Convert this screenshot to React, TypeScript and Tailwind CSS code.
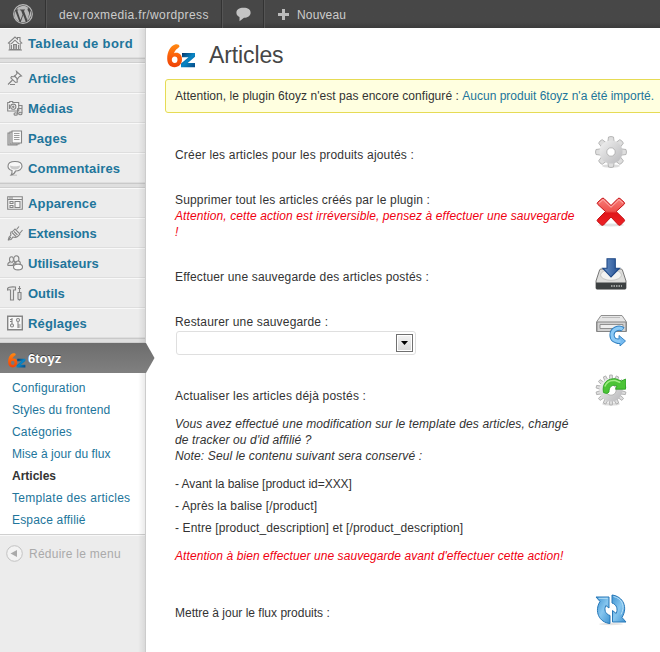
import React from "react";

const menuIcons: Record<string, React.ReactNode> = {
  home: (
    <>
      <path d="M1 8.500 8 2l2.500 2.200V2.500h2.500v4L15.200 8.500M2.800 8v6.500h10.400V8" fill="#f4f4f4" />
      <path d="M4 9 8 5.200 12 9M6.500 14.500V9.500h3v5M4.500 10v4M11.500 10v4M8 9.500v5M1.500 15h13.500" />
    </>
  ),
  pin: (
    <>
      <path d="M9.500 1.500 14.500 6l-2 .5-2.500 3 .3 2.500-1.800.5L3.800 8l.7-1.500 2.800.2 2.700-3z" fill="#f2f2f2" />
      <path d="M5.500 10 1 14.500M7 5.500l4 4M3 14.500h5" />
    </>
  ),
  media: (
    <>
      <path d="M.7 2.500h2V1.500h3v1h6V11H.7z" fill="#f4f4f4" />
      <circle cx="6.300" cy="6.700" r="2.600" fill="#fff" />
      <circle cx="6.300" cy="6.700" r=".7" />
      <path d="M2.500 4.500v4.500M10.500 14V8.500M11.500 5.500h3.500V13M10.500 8.500h4.500" />
      <ellipse cx="8.700" cy="14" rx="1.700" ry="1.300" fill="#ddd" />
      <ellipse cx="13.300" cy="13.500" rx="1.700" ry="1.300" fill="#ddd" />
    </>
  ),
  pages: (
    <>
      <path d="M1 3h9v12H1z" fill="#ddd" />
      <path d="M3 2h9v12H3z" fill="#eee" />
      <path d="M5 1h9.500v12H5z" fill="#fafafa" />
      <path d="M7 3.500h5.500M7 5.500h5.500M7 7.500h5.500M7 9.500h5.500" strokeWidth=".8" />
    </>
  ),
  comment: (
    <>
      <path d="M8 1.500c4 0 7 1.800 7 4.700S12 11 8.500 11c-.5 2-2 3.400-4.500 4 1-1.300 1.300-2.700 1-4.500C2.500 9.800 1 8.300 1 6.200 1 3.300 4 1.500 8 1.500z" fill="#f8f8f8" />
      <path d="M3 5.500c1.500 1 8.500 1 10 0 0 3-2.500 4-5 4s-5-1-5-4z" fill="#ccc" stroke="none" />
      <path d="M4 15.200h6" opacity=".4" />
    </>
  ),
  theme: (
    <>
      <path d="M.7 1.700h14.600v12.600H.7z" fill="#f5f5f5" />
      <path d="M1 4.500h14M2 3h4M8 6.500h5v6H8zM3 6.500h3v2H3zM3 10.500h3v2H3z" />
    </>
  ),
  plug: (
    <>
      <path d="M4 7c1 .2 2-.8 4-3l5 5c-2 3-4.500 4-7 3l-2 2.500-2.500.3.500-2.500L4 10c-.7-1-.5-2 0-3z" fill="#f0f0f0" />
      <path d="m9.500 4.500 2.500-3M13 8l2.500-3M7 6.500l3.500 3.500M1 15l3-3M5 7.500l4 4" />
    </>
  ),
  users: (
    <>
      <ellipse cx="4.500" cy="4.500" rx="2" ry="2.800" fill="#eee" />
      <path d="M3.500 7C1 7.500.5 9 1 10.500h5" fill="#ddd" />
      <ellipse cx="9.300" cy="4" rx="2.600" ry="3.200" fill="#eee" />
      <path d="M8.500 7c-1.500 1-2.500 2-2.500 4" />
      <circle cx="11" cy="8.300" r="2.300" fill="#eee" />
      <ellipse cx="11" cy="12" rx="4.500" ry="2.900" fill="#fafafa" />
    </>
  ),
  tools: (
    <>
      <path d="M.5 3.500C2 1.500 4 1.500 8.500 2v3H6.500v10h-3V5C2.500 4.500 2 4.500.5 5z" fill="#e5e5e5" />
      <path d="M12.500 1v6M11 7.500h3v6.500l-1.500 1-1.500-1zM11 3.500h3" fill="#ddd" />
    </>
  ),
  settings: (
    <>
      <path d="M.7 1.200h14.600v13.600H.7z" fill="#f8f8f8" strokeWidth="1.400" />
      <path d="M5 3v6M3 4.500h1.500M3 6.500h1.500M11 7v6M11.500 10h2M11.500 12h2" />
      <circle cx="5" cy="10.500" r="1.500" />
      <circle cx="11" cy="5" r="1.500" />
    </>
  ),
};

function MenuIcon({ name }: { name: string }) {
  return (
    <svg className="ml-[7px] mr-[5px] h-4 w-4 shrink-0" viewBox="0 0 16 16" fill="none" stroke="#858585" strokeWidth="1.1">
      {menuIcons[name]}
    </svg>
  );
}

function Logo({ className, id }: { className: string; id: string }) {
  return (
    <svg className={className} viewBox="0 0 29 24">
      <defs>
        <linearGradient id={id + "o"} x1="0" y1="0" x2="0" y2="1">
          <stop offset="0" stopColor="#ff8a12" />
          <stop offset=".5" stopColor="#fb600b" />
          <stop offset="1" stopColor="#ee4308" />
        </linearGradient>
        <linearGradient id={id + "b"} x1="0" y1="0" x2="1" y2="1">
          <stop offset="0" stopColor="#062f63" />
          <stop offset=".5" stopColor="#0a86c4" />
          <stop offset="1" stopColor="#064985" />
        </linearGradient>
      </defs>
      <path fillRule="evenodd" d="M8 .4C10.500-.3 12.800.6 12.400 2.600 12 4.200 9 4.500 7 9.200 11.500 7.800 15 10.500 15 15.300 15 20 12 23.200 7.500 23.200 3 23.200.2 20 .2 14.500.2 7.500 3.500 1.800 8 .4zM7.700 12.500c-1.800 0-2.900 1.300-2.900 3.200S5.900 19 7.700 19s2.800-1.300 2.800-3.300-1-3.200-2.800-3.200z" fill={"url(#" + id + "o)"} />
      <path d="M15 9h13v3.700L20.700 19H28v4.200H14v-3.600l7.500-6.400H15z" fill={"url(#" + id + "b)"} />
    </svg>
  );
}

function Separator() {
  return <div className="h-[5px] border-b border-t border-b-[#cfcfcf] border-t-[#c9c9c9] bg-[#dfdfdf]" />;
}

function MenuItem({ icon, label, spacing }: { icon: string; label: string; spacing: string }) {
  return (
    <div className="flex h-[30px] items-center border-b border-t border-b-[#dedede] border-t-[#f9f9f9] text-[13px] font-bold text-[#21759b]">
      <MenuIcon name={icon} />
      <span className={"whitespace-nowrap pt-[2px] leading-[18px] " + spacing}>{label}</span>
    </div>
  );
}

function Gear({ teeth, hole, className, children }: { teeth: number; hole: number; className: string; children?: React.ReactNode }) {
  const angles = Array.from({ length: teeth }, (_, i) => (i * 360) / teeth);
  return (
    <svg className={className} viewBox="0 0 32 32">
      <defs>
        <linearGradient id={"gear" + teeth} x1="0" y1="0" x2="1" y2="1">
          <stop offset="0" stopColor="#f3f3f3" />
          <stop offset=".5" stopColor="#d5d5d6" />
          <stop offset="1" stopColor="#b8b8bb" />
        </linearGradient>
      </defs>
      <ellipse cx="16" cy="30" rx="9" ry="1.600" fill="#bbb" opacity=".5" />
      {angles.map((a) => (
        <path key={a} d={teeth === 8 ? "M12.800 6 13.500 1q2.500-1 5 0l.7 5z" : "M14.300 6l.4-5h2.600l.4 5z"} transform={"rotate(" + a + " 16 16)"} fill="#dedede" stroke="#aaa" strokeWidth=".8" />
      ))}
      <circle cx="16" cy="16" r="11.500" fill={"url(#gear" + teeth + ")"} />
      <circle cx="16" cy="16" r={hole} fill="#fff" stroke="#aaa" strokeWidth=".8" />
      {children}
    </svg>
  );
}

function CrossIcon() {
  return (
    <svg className="h-8 w-8" viewBox="0 0 32 32">
      <defs>
        <linearGradient id="cross" x1="0" y1="0" x2="0" y2="1">
          <stop offset="0" stopColor="#f87d78" />
          <stop offset=".48" stopColor="#ee514d" />
          <stop offset=".55" stopColor="#e0161a" />
          <stop offset="1" stopColor="#ee2125" />
        </linearGradient>
      </defs>
      <ellipse cx="16" cy="29" rx="13" ry="1.500" fill="#aaa" opacity=".35" />
      <path d="M7 2.500 2.500 6.500q-.7 1 .2 1.800L10.500 15.500 2.500 23.500q-.8 1 0 1.900L6.500 29q1 .7 2 0L16 21l7.500 8q1 .7 2 0l3.700-3.700q.8-1 0-1.900l-8-7.900 8-7.300q.8-1 0-1.900L25 2.500q-1-.7-2 0l-7 7-7-7q-1-.7-2 0z" fill="url(#cross)" stroke="#c50f14" />
      <path d="M4 7.200 8 3.500l8 7.800 8-7.800 4 3.700" fill="none" stroke="#ffc1bd" strokeWidth=".9" />
    </svg>
  );
}

function SaveIcon() {
  return (
    <svg className="h-8 w-8" viewBox="0 0 32 32">
      <defs>
        <linearGradient id="saveArrow" x1="0" y1="0" x2="1" y2="0">
          <stop offset="0" stopColor="#6b94c9" />
          <stop offset="1" stopColor="#234f91" />
        </linearGradient>
      </defs>
      <path d="M6 11h20q1 0 1.400 1l3.600 11v7q0 1-1 1H2q-1 0-1-1v-7l3.600-11q.4-1 1.400-1z" fill="#dededc" stroke="#777" />
      <ellipse cx="16" cy="17" rx="10.500" ry="5.300" fill="#f3f3f1" stroke="#bdbdbb" strokeWidth=".8" />
      <path d="M1 24.500h30V30q0 1.300-1 1.300H2q-1 0-1-1.300z" fill="#3d4142" />
      <path d="M16 28h11" stroke="#b9bdbb" strokeWidth="1.500" strokeDasharray="1.500 1" />
      <path d="M12 .7h8.300v9.500h4.200L16 19 7.800 10.200H12z" fill="url(#saveArrow)" stroke="#204a87" strokeWidth="1.100" />
    </svg>
  );
}

function RestoreIcon() {
  return (
    <svg className="h-8 w-8" viewBox="0 0 32 32">
      <path d="M6 1.500h21L31.500 8v9.500H1.500V8z" fill="#e6e6e6" stroke="#909090" />
      <path d="M2 8h29v9.500H2z" fill="#d2d2d2" stroke="#858585" />
      <path d="M5 10.500h23v4H5z" fill="#eee" stroke="#909090" />
      <path d="M7 3.500h18" stroke="#bcbcbc" />
      <path d="M28 15.500C24 12.500 17 15 17 21c0 4.500 3.500 6.500 8 6.500" fill="none" stroke="#2f7fc0" strokeWidth="5.200" />
      <path d="m24 21.500 6.500 5.500-5.500 5v-2.500h-3v-4.500h2z" fill="#75baf0" stroke="#2f7fc0" strokeWidth=".9" />
      <path d="M27.600 15.300C24 12.800 17 15 17 21c0 4.500 3.500 6.500 8.500 6.500" fill="none" stroke="#8ccaf6" strokeWidth="3.200" />
    </svg>
  );
}

function SyncIcon() {
  return (
    <svg className="h-8 w-8" viewBox="0 0 32 32">
      <defs>
        <linearGradient id="sync" x1="0" y1="0" x2="1" y2="1">
          <stop offset="0" stopColor="#3f93d1" />
          <stop offset=".5" stopColor="#86c6ef" />
          <stop offset="1" stopColor="#3f93d1" />
        </linearGradient>
      </defs>
      <ellipse cx="16" cy="30" rx="12" ry="1.200" fill="#bbb" opacity=".4" />
      <g fill="url(#sync)" stroke="#2878b8" strokeWidth="1">
        <path d="M1 3h13v11l-3.200-2.500C9 15.500 10 20 15 21.500V29.500C4 28.500-1 17 5 7.500z" />
        <path d="M31 28H17.500V16.500l3.700 3C23 15.500 22 10.500 17 9V1C28.500 2.500 33 13.500 27 23.500z" />
      </g>
      <path d="M3.500 4.300h9.200M18.500 2.500c9 2 12 10 7.500 18" fill="none" stroke="#b7e0f8" strokeWidth="1" />
    </svg>
  );
}

const submenu: [string, string][] = [
  ["Configuration", "tracking-[.18px]"],
  ["Styles du frontend", "tracking-[.08px]"],
  ["Catégories", "tracking-[.2px]"],
  ["Mise à jour du flux", "tracking-[.06px]"],
  ["Articles", "font-bold text-[#333]"],
  ["Template des articles", "tracking-[.27px]"],
  ["Espace affilié", "tracking-[.18px]"],
];

function Sidebar() {
  return (
    <aside className="relative w-[146px] shrink-0 bg-[#ececec]">
      <MenuItem icon="home" label="Tableau de bord" spacing="tracking-[.37px]" />
      <Separator />
      <MenuItem icon="pin" label="Articles" spacing="" />
      <MenuItem icon="media" label="Médias" spacing="tracking-[.2px]" />
      <MenuItem icon="pages" label="Pages" spacing="tracking-[.2px]" />
      <MenuItem icon="comment" label="Commentaires" spacing="tracking-[.16px]" />
      <Separator />
      <MenuItem icon="theme" label="Apparence" spacing="tracking-[.15px]" />
      <MenuItem icon="plug" label="Extensions" spacing="tracking-[-.08px]" />
      <MenuItem icon="users" label="Utilisateurs" spacing="" />
      <MenuItem icon="tools" label="Outils" spacing="" />
      <MenuItem icon="settings" label="Réglages" spacing="tracking-[.15px]" />
      <Separator />
      <div className="relative z-10 flex h-[30px] items-center bg-gradient-to-b from-[#6d6d6d] to-[#808080] text-[13px] font-bold text-white">
        <Logo id="side" className="ml-2 mr-[2px] mt-[5px] h-[15px] w-[18px]" />
        <span className="pt-px [text-shadow:0_-1px_0_#444]">6toyz</span>
        <svg className="absolute left-[146px] top-0 h-[30px] w-[9px]" viewBox="0 0 9 30">
          <defs>
            <linearGradient id="pointer" x1="0" y1="0" x2="0" y2="1">
              <stop stopColor="#6d6d6d" />
              <stop offset="1" stopColor="#808080" />
            </linearGradient>
          </defs>
          <path d="M0 0 8.500 15 0 30z" fill="url(#pointer)" />
        </svg>
      </div>
      <ul className="h-[162px] border-b border-[#d0d0d0] bg-white pl-3 pt-1 text-[12px] leading-[22px] text-[#21759b]">
        {submenu.map(([label, style]) => (
          <li key={label} className={"whitespace-nowrap " + style}>{label}</li>
        ))}
      </ul>
      <div className="flex h-9 items-center border-t border-[#f9f9f9] text-[12px] text-[#aaa]">
        <svg className="ml-[6px] mr-[6px] h-[17px] w-[17px]" viewBox="0 0 17 17">
          <circle cx="8.500" cy="8.500" r="7.800" fill="#f3f3f3" stroke="#c2c2c2" />
          <path d="M4.500 8.500 11 5v7z" fill="#aaa" />
        </svg>
        <span className="tracking-[.25px]">Réduire le menu</span>
      </div>
      <div className="absolute inset-y-0 right-0 w-2 border-r border-[#ccc] bg-gradient-to-r from-transparent to-black/8" />
    </aside>
  );
}

function Row({ height, pad, icon, iconPad, children }: { height: string; pad: string; icon: React.ReactNode; iconPad: string; children: React.ReactNode }) {
  return (
    <div className={"flex " + height}>
      <div className={"w-[420px] shrink-0 " + pad}>{children}</div>
      <div className={iconPad}>{icon}</div>
    </div>
  );
}

export default function App() {
  return (
    <div className="flex h-[652px] w-[660px] flex-col overflow-hidden bg-white font-['Liberation_Sans',Arial,sans-serif]">
      <header className="flex h-7 shrink-0 items-center bg-gradient-to-b from-[#474747] from-80% to-[#3b3b3b] text-[12px] text-[#ccc]">
        <div className="flex h-full w-[46px] items-center justify-center border-r border-[#333]">
          <svg className="h-5 w-5" viewBox="0 0 20 20">
            <circle cx="10" cy="10" r="9.300" fill="none" stroke="#b8b8b8" strokeWidth="1.200" />
            <path d="M2.300 7 6.500 18A8.200 8.200 0 0 1 2.300 7zM3.200 5.500A8.200 8.200 0 0 1 15.500 4c-1.500.5-1.200 2 0 3.500 1 1.500.8 3-.2 5.500l-1 3L10.800 6.500l1.200-.2v-.7H6.800v.7l1.300.2 1.500 4L7.500 16 4.300 6.500l1-.2v-.7zM10.200 11l2.500 6.800a8.200 8.200 0 0 1-4.900.1zM17.200 6.200A8.200 8.200 0 0 1 14 17.100c1.700-4.500 3.700-8 3.200-10.900z" fill="#b8b8b8" />
          </svg>
        </div>
        <div className="flex h-full w-[176px] items-center border-l border-r border-l-[#555] border-r-[#333] pl-3 pt-px tracking-[.37px]">dev.roxmedia.fr/wordpress</div>
        <div className="flex h-full w-[42px] items-center justify-center border-l border-r border-l-[#555] border-r-[#333]">
          <svg className="h-[15px] w-[15px]" viewBox="0 0 15 15">
            <path d="M7.500.8C12 .8 14.600 2.500 14.600 5.700S11.500 10.600 8 10.700L3.500 14.300V10C1.500 9 .4 7.700.4 5.700.4 2.500 3.300.8 7.500.8z" fill="#c4c4c4" />
          </svg>
        </div>
        <div className="flex h-full items-center border-l border-[#555] pl-[13px]">
          <svg className="mr-2 h-[11px] w-[11px]" viewBox="0 0 11 11"><path d="M4 0h3v4h4v3H7v4H4V7H0V4h4z" fill="#bbb" /></svg>
          <span className="pt-px tracking-[.15px]">Nouveau</span>
        </div>
      </header>
      <div className="flex min-h-0 flex-1">
        <Sidebar />
        <main className="w-[514px] shrink-0 pl-[19px] pt-[9px] text-[12px] leading-4 text-[#333]">
          <div className="flex h-[42px] items-start pl-[2px]">
            <Logo id="main" className="mt-[7px] h-6 w-[29px]" />
            <h1 className="ml-[13px] mt-[2px] text-[23px] leading-8 tracking-[-.12px] text-[#464646]">Articles</h1>
          </div>
          <div className="flex h-[34px] w-[520px] items-center whitespace-nowrap rounded-[3px] border border-[#e6db55] bg-[#ffffe0] pl-[9px]">
            <span><span className="tracking-[.05px]">Attention, le plugin 6toyz n'est pas encore configuré : </span><span className="text-[#21759b]">Aucun produit 6toyz n'a été importé.</span></span>
          </div>
          <section className="pl-[10px]">
            <Row height="h-[70px]" pad="pt-[34px] tracking-[.18px]" iconPad="pt-[23px]" icon={<Gear teeth={8} hole={4.2} className="h-8 w-8" />}>
              Créer les articles pour les produits ajoutés :
            </Row>
            <Row height="h-[73px]" pad="pt-[9px]" iconPad="pt-[13px]" icon={<CrossIcon />}>
              <p className="tracking-[.17px]">Supprimer tout les articles créés par le plugin :</p>
              <p className="whitespace-nowrap italic tracking-[.105px] text-[#f00010]">
                Attention, cette action est irréversible, pensez à effectuer une sauvegarde<br />!
              </p>
            </Row>
            <Row height="h-[50px]" pad="pt-[13px] tracking-[.16px]" iconPad="pt-[2px]" icon={<SaveIcon />}>
              Effectuer une sauvegarde des articles postés :
            </Row>
            <Row height="h-[66px]" pad="pt-2" iconPad="pt-[8px]" icon={<RestoreIcon />}>
              <p className="tracking-[.17px]">Restaurer une sauvegarde :</p>
              <div className="ml-[1px] mt-[1px] flex h-6 w-60 items-center justify-end rounded-[3px] border border-[#dfdfdf] bg-white pr-[2px]">
                <div className="flex h-[18px] w-[17px] items-center justify-center border border-[#707070] bg-gradient-to-b from-[#f3f3f3] to-[#d8d8d8] shadow-[inset_0_0_0_1px_#fff]">
                  <svg className="h-1 w-[7px]" viewBox="0 0 7 4"><path d="M0 0h7L3.500 4z" fill="#000" /></svg>
                </div>
              </div>
            </Row>
            <Row
              height="h-[210px]"
              pad="pt-4"
              iconPad="pt-[2px]"
              icon={
                <Gear teeth={14} hole={5.2} className="h-8 w-8">
                  <path d="M8.500 18.500C6.500 9 13 4 20.500 4.700L26.500 7 30.500 5v10.200H20.500L22 12c-4.500-2-8 .5-8 6q-1.500 2.500-5.500.5z" fill="#4cc437" stroke="#25a01c" strokeWidth=".8" />
                  <path d="M9.800 12.500c1.500-4.500 5.500-6.500 10.500-6l5 2" fill="none" stroke="#a2ec86" strokeWidth="1.500" />
                </Gear>
              }
            >
              <p className="tracking-[.19px]">Actualiser les articles déjà postés :</p>
              <p className="mt-3 whitespace-nowrap italic tracking-[.125px]">
                Vous avez effectué une modification sur le template des articles, changé<br />
                de tracker ou d'id affilié ?<br />
                Note: Seul le contenu suivant sera conservé :
              </p>
              <ul className="mt-[9px] leading-[22px]">
                <li className="tracking-[-.04px]">- Avant la balise [product id=XXX]</li>
                <li className="tracking-[.12px]">- Après la balise [/product]</li>
                <li className="tracking-[.11px]">- Entre [product_description] et [/product_description]</li>
              </ul>
              <p className="mt-[9px] whitespace-nowrap italic tracking-[.08px] text-[#f00010]">Attention à bien effectuer une sauvegarde avant d'effectuer cette action!</p>
            </Row>
            <Row height="h-[56px]" pad="pt-[23px]" iconPad="pt-[12px]" icon={<SyncIcon />}>
              Mettre à jour le flux produits :
            </Row>
          </section>
        </main>
      </div>
    </div>
  );
}
